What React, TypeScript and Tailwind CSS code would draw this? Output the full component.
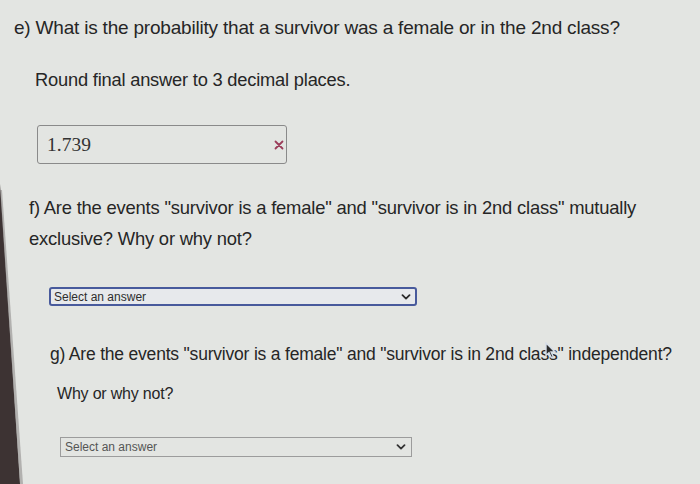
import React from "react";

function Chevron({ className = "" }: { className?: string }) {
  return (
    <svg viewBox="0 0 10 6" className={className} fill="none" stroke="currentColor" strokeWidth="1.8" strokeLinecap="round" strokeLinejoin="round">
      <path d="M1.5 1.2 5 4.6 8.5 1.2" />
    </svg>
  );
}

export default function App() {
  return (
    <div
      className="relative h-[484px] w-[700px] overflow-hidden bg-[#e3e5e2] text-[#262626]"
      style={{ fontFamily: '"Liberation Sans", Arial, sans-serif' }}
    >
      {/* e) */}
      <p className="pl-[14px] pt-[16px] text-[19px] leading-[24px] tracking-[-0.2px]">
        e) What is the probability that a survivor was a female or in the 2nd class?
      </p>
      <p className="pl-[35px] pt-[28px] text-[18.3px] leading-[24px] tracking-[-0.2px]">
        Round final answer to 3 decimal places.
      </p>

      <div className="ml-[37px] mt-[33px] flex h-[39px] w-[250px] items-center justify-between rounded-[3px] border border-[#8a8a8a] pl-[9px] pr-[2px]">
        <span className="text-[19.5px] text-[#333]" style={{ fontFamily: '"Liberation Serif", "Times New Roman", serif' }}>
          1.739
        </span>
        <svg viewBox="0 0 10 10" className="h-[10px] w-[10px] text-[#9b3d5a]" stroke="currentColor" strokeWidth="1.8" strokeLinecap="round">
          <path d="M1.5 1.5 8.5 8.5M8.5 1.5 1.5 8.5" />
        </svg>
      </div>

      {/* f) */}
      <p className="pl-[29px] pt-[28px] text-[18.4px] leading-[31px] tracking-[-0.2px]">
        f) Are the events "survivor is a female" and "survivor is in 2nd class" mutually
        <br />
        exclusive? Why or why not?
      </p>

      <div className="ml-[49px] mt-[33px] flex h-[19px] w-[368px] items-center justify-between rounded-[3px] border-2 border-[#485a9c] bg-[#e7e9ec] pl-[3px] pr-[4px]">
        <span className="text-[12px] leading-none text-[#2e2e2e]">Select an answer</span>
        <Chevron className="h-[6px] w-[10px] text-[#2b2b2b]" />
      </div>

      {/* g) */}
      <p className="pl-[50px] pt-[36px] text-[17.5px] leading-[24px] tracking-[-0.2px]">
        g) Are the events "survivor is a female" and "survivor is in 2nd class" independent?
      </p>
      <p className="pl-[57px] pt-[16px] text-[16px] leading-[24px] tracking-[-0.2px]">Why or why not?</p>

      <div className="ml-[60px] mt-[31px] flex h-[20px] w-[352px] items-center justify-between border border-[#9c9c9c] pl-[4px] pr-[5px]">
        <span className="text-[12px] leading-none text-[#555]">Select an answer</span>
        <Chevron className="h-[6px] w-[10px] text-[#333]" />
      </div>

      {/* mouse pointer over the g) line */}
      <svg viewBox="0 0 12 17" className="absolute left-[545px] top-[342px] h-[17px] w-[12px]">
        <path d="M1 1v12.5l3-2.8 2.3 5 2-0.9-2.3-4.9H10z" fill="#2a2a2a" stroke="#d6dee8" strokeWidth="1.4" />
      </svg>

      {/* monitor bezel edge at the left */}
      <svg viewBox="0 0 24 300" preserveAspectRatio="none" className="absolute bottom-0 left-0 h-[300px] w-[24px]">
        <polygon points="0,0 20,300 0,300" fill="#3d3333" />
        <polygon points="0,6 2,6 23,300 20,300" fill="#757070" opacity="0.45" />
      </svg>
    </div>
  );
}
